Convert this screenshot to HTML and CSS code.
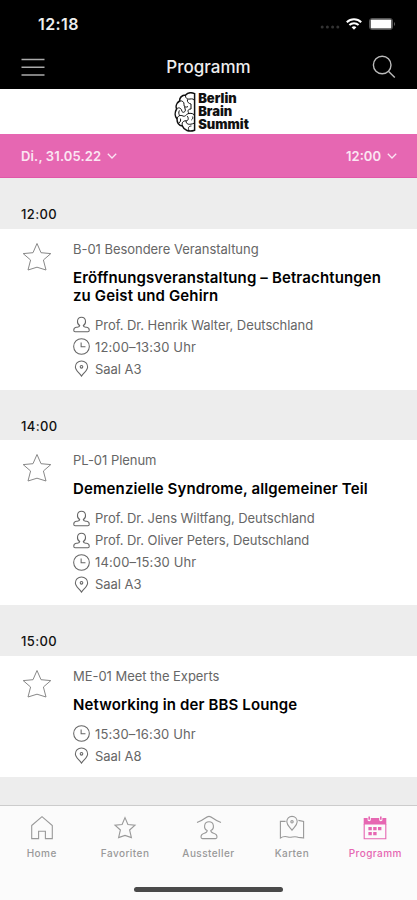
FILE: index.html
```html
<!DOCTYPE html>
<html lang="de">
<head>
    <meta charset="UTF-8"/>
    <meta name="viewport" content="width=device-width, initial-scale=1.0"/>
    <title>Programm</title>
    <link rel="stylesheet" href="styles.css">
</head>
<body>
    <svg class="sprite" aria-hidden="true">
        <symbol id="star" viewBox="0 0 30 30">
            <path d="M15 1.5 L19 10.7 L28.8 11.6 L21.4 18 L24 28 L15 25.2 L6 28 L8.6 18 L1.2 11.6 L11 10.7 Z"/>
        </symbol>
        <symbol id="person" viewBox="0 0 18 18">
            <path d="M7.1 10 C3.6 8.4 3.8 1.3 9 1.3 C14.2 1.3 14.4 8.4 10.9 10 C10.9 11.8 12.4 11.6 14.6 12 C16.6 12.4 17.2 13.4 17.2 15 C17.2 16.2 16.8 16.6 15.8 16.6 H2.2 C1.2 16.6 0.8 16.2 0.8 15 C0.8 13.4 1.4 12.4 3.4 12 C5.6 11.6 7.1 11.8 7.1 10 Z"/>
        </symbol>
        <symbol id="clock" viewBox="0 0 18 18">
            <circle cx="9" cy="9" r="8.3"/>
            <path d="M8.6 4.7 V9.2 H13.2"/>
        </symbol>
        <symbol id="pin" viewBox="0 0 18 18">
            <path d="M9 17.1 C6.4 13.4 2.5 10.8 2.5 7.4 C2.5 3.6 5.4 1 9 1 C12.6 1 15.5 3.6 15.5 7.4 C15.5 10.8 11.6 13.4 9 17.1 Z"/>
            <circle cx="9" cy="7.2" r="1.4"/>
        </symbol>
        <symbol id="chevron" viewBox="0 0 10 6">
            <path d="M0.8 0.8 L5 5 L9.2 0.8"/>
        </symbol>
    </svg>

    <header>
        <div class="status">
            <span class="time">12:18</span>
            <div class="status-icons">
                <svg class="signal" viewBox="0 0 20 4">
                    <circle cx="2.2" cy="2" r="1.5"/>
                    <circle cx="7.4" cy="2" r="1.5"/>
                    <circle cx="12.6" cy="2" r="1.5"/>
                    <circle cx="17.8" cy="2" r="1.5"/>
                </svg>
                <svg class="wifi" viewBox="0 0 16 12">
                    <path d="M0.8 4.2 C4.8 0.2 11.2 0.2 15.2 4.2"/>
                    <path d="M3.4 7 C6 4.5 10 4.5 12.6 7"/>
                    <path class="dot" d="M5.6 9.2 C7 8 9 8 10.4 9.2 L8 11.7 Z"/>
                </svg>
                <svg class="battery" viewBox="0 0 27 12">
                    <rect class="shell" x="0.5" y="0.5" width="23" height="11" rx="2.5"/>
                    <rect class="charge" x="1.6" y="1.6" width="20.8" height="8.8" rx="1"/>
                    <path class="shell" d="M25.5 4.5 V7.5"/>
                </svg>
            </div>
        </div>
        <div class="nav">
            <svg class="menu" viewBox="0 0 23 19">
                <path d="M0 1.5 H23 M0 9.3 H23 M0 17 H23"/>
            </svg>
            <h1>Programm</h1>
            <svg class="search" viewBox="0 0 24 24">
                <circle cx="10.2" cy="10" r="8.8"/>
                <path d="M16.4 16.2 L22.8 22.6"/>
            </svg>
        </div>
    </header>

    <div class="brand">
        <svg viewBox="0 0 22 40">
            <path class="outline" d="M20.6 1.6 C16 -0.2 13 1.4 11.6 3 C7.6 3 5.4 6 5.6 9 C2.2 11 1.6 14.6 2.6 17 C0.6 20.4 0.8 24.6 3 27 C3 31 5.4 33.6 8.4 34 C10 38.4 15 40.2 20.6 38.2 Z"/>
            <path d="M11.6 3 C11 6 13.4 7.6 16 7 C18 6.6 20.6 7 20.6 9 M5.6 9 C8 8.4 10.4 9.8 10 12.6 C9.6 15 12 15.6 14 14.6 M13.4 7.4 C13 10.6 15 11.4 17 12 V17 C14 17 13.2 19 15 21.4 M2.6 17 C5 14.6 7.4 16.4 7.8 19 C8.4 21 11 20.6 11.4 18.2 L10.6 14.8 M3 27 C3.6 24 6 22.6 9 24 C11.4 25.2 12 22 15 21.4 C17.6 21 20.6 22 20.6 24 M8.4 34 C7.4 31 9 28.6 12 28.8 C14.6 29 14.8 26 13.2 24 M12 28.8 C12 32.4 15 33.4 20.6 31 M15 38.4 C13.6 35.6 15 34 17.4 34 M6 24 C4.6 22 4.4 20.6 5.4 18.4 M5 31 C6.4 30 7 28.4 6.4 26.6 M17.4 28 C18.6 27 19.2 26 18.4 24.6"/>
        </svg>
        <div class="brand-name">Berlin<br>Brain<br>Summit</div>
    </div>

    <div class="filter">
        <div class="filter-item date">Di., 31.05.22 <svg><use href="#chevron"/></svg></div>
        <div class="filter-item">12:00 <svg><use href="#chevron"/></svg></div>
    </div>

    <main>
        <h2>12:00</h2>
        <div class="session">
            <svg class="fav"><use href="#star"/></svg>
            <div class="info">
                <p class="category">B-01 Besondere Veranstaltung</p>
                <h3>Eröffnungsveranstaltung – Betrachtungen<br>zu Geist und Gehirn</h3>
                <ul>
                    <li><svg><use href="#person"/></svg><span>Prof. Dr. Henrik Walter, Deutschland</span></li>
                    <li class="hours"><svg><use href="#clock"/></svg><span>12:00–13:30 Uhr</span></li>
                    <li><svg><use href="#pin"/></svg><span>Saal A3</span></li>
                </ul>
            </div>
        </div>

        <h2>14:00</h2>
        <div class="session">
            <svg class="fav"><use href="#star"/></svg>
            <div class="info">
                <p class="category">PL-01 Plenum</p>
                <h3>Demenzielle Syndrome, allgemeiner Teil</h3>
                <ul>
                    <li><svg><use href="#person"/></svg><span>Prof. Dr. Jens Wiltfang, Deutschland</span></li>
                    <li><svg><use href="#person"/></svg><span>Prof. Dr. Oliver Peters, Deutschland</span></li>
                    <li class="hours"><svg><use href="#clock"/></svg><span>14:00–15:30 Uhr</span></li>
                    <li><svg><use href="#pin"/></svg><span>Saal A3</span></li>
                </ul>
            </div>
        </div>

        <h2>15:00</h2>
        <div class="session">
            <svg class="fav"><use href="#star"/></svg>
            <div class="info">
                <p class="category">ME-01 Meet the Experts</p>
                <h3>Networking in der BBS Lounge</h3>
                <ul>
                    <li class="hours"><svg><use href="#clock"/></svg><span>15:30–16:30 Uhr</span></li>
                    <li><svg><use href="#pin"/></svg><span>Saal A8</span></li>
                </ul>
            </div>
        </div>
    </main>

    <footer>
        <nav class="tabs">
            <a class="tab">
                <svg viewBox="0 0 26 26"><path d="M2.7 10.5 L13 1.7 L23.3 10.5 V23.6 H16.4 V16.2 H9.6 V23.6 H2.7 Z"/></svg>
                <span>Home</span>
            </a>
            <a class="tab">
                <svg viewBox="0 0 26 26"><path d="M13 2.6 L15.9 9.5 L23 10.1 L17.6 15 L19.4 22.6 L13 20.4 L6.6 22.6 L8.4 15 L3 10.1 L10.1 9.5 Z"/></svg>
                <span>Favoriten</span>
            </a>
            <a class="tab">
                <svg viewBox="0 0 26 26"><path d="M1 7.6 C8.6 4.8 10 1.4 13 1.4 C16 1.4 17.4 4.8 25 7.6 M11.2 15.6 C7.2 13.8 7.8 6.8 13 6.8 C18.2 6.8 18.8 13.8 14.8 15.6 C14.8 19.6 21 16.8 21 22 C21 23.2 20.6 23.6 19.6 23.6 H6.4 C5.4 23.6 5 23.2 5 22 C5 16.8 11.2 19.6 11.2 15.6 Z"/></svg>
                <span>Aussteller</span>
            </a>
            <a class="tab">
                <svg viewBox="0 0 26 26"><path d="M6.6 6.4 H1.4 V23 C4.2 21.2 6.6 21.2 9 22 C12 23.2 14.6 20.8 18 22 C20.6 23 22.4 22.4 24.6 23 V6.4 L19.4 5.4 M13 15.2 C11 12.2 7.8 10.2 7.8 6.8 C7.8 3.6 10 1.4 13 1.4 C16 1.4 18.2 3.6 18.2 6.8 C18.2 10.2 15 12.2 13 15.2 Z"/><circle cx="13" cy="6.8" r="1.2"/></svg>
                <span>Karten</span>
            </a>
            <a class="tab active">
                <svg viewBox="0 0 26 26">
                    <path d="M2.2 9 V23.8 H23.8 V9"/>
                    <path class="solid" d="M1.7 3 H5.6 V5.2 Q7.2 7.4 8.8 5.2 V3 H17.2 V5.2 Q18.8 7.4 20.4 5.2 V3 H24.3 V9.6 H1.7 Z"/>
                    <path class="solid" d="M6.4 1.4 H8 V4.8 H6.4 Z M18 1.4 H19.6 V4.8 H18 Z"/>
                    <path class="solid" d="M6.4 12 H9.8 V15.2 H6.4 Z M11.2 12 H14.6 V15.2 H11.2 Z M16 12 H19.4 V15.2 H16 Z M6.4 17 H9.8 V20.2 H6.4 Z M11.2 17 H14.6 V20.2 H11.2 Z"/>
                </svg>
                <span>Programm</span>
            </a>
        </nav>
        <div class="home-bar"></div>
    </footer>
</body>
</html>
```

FILE: styles.css
```css
* {
    box-sizing: border-box;
}

body {
    margin: 0;
    height: 900px;
    display: flex;
    flex-direction: column;
    overflow: hidden;
    font-family: Inter, "Liberation Sans", sans-serif;
    background: #ededed;
}

h1, h2, h3, p, ul {
    margin: 0;
    padding: 0;
}

svg {
    display: block;
    flex: none;
    fill: none;
    stroke: currentColor;
}

.sprite {
    display: none;
}

header {
    height: 89px;
    background: #000;
    color: #eee;
}

.status {
    display: flex;
    justify-content: space-between;
    align-items: center;
    height: 46px;
    padding: 1px 21px 0 38px;
}

.time {
    font-size: 16px;
    font-weight: 600;
    letter-spacing: 0.4px;
}

.status-icons {
    display: flex;
    align-items: center;
}

.signal {
    width: 20px;
    height: 4px;
    margin: 7px 6px 0 0;
    fill: #333;
    stroke: none;
}

.wifi {
    width: 16px;
    height: 12px;
    margin-right: 7px;
    stroke: #fff;
    stroke-width: 2;
}

.wifi .dot {
    fill: #fff;
    stroke: none;
}

.battery {
    width: 27px;
    height: 12px;
}

.shell {
    stroke: #555;
}

.charge {
    fill: #fff;
    stroke: none;
}

.nav {
    display: flex;
    justify-content: space-between;
    align-items: center;
    height: 42px;
    padding: 0 21px;
}

.nav h1 {
    font-size: 17px;
    font-weight: 500;
}

.menu {
    width: 24px;
    height: 19px;
    stroke: #aaa;
    stroke-width: 1.5;
}

.search {
    width: 24px;
    height: 24px;
    stroke: #bbb;
    stroke-width: 1.4;
}

.brand {
    display: flex;
    justify-content: center;
    align-items: center;
    gap: 2px;
    height: 45px;
    padding-left: 6px;
    background: #fff;
    color: #111;
}

.brand svg {
    width: 22px;
    height: 40px;
    stroke-width: 1;
}

.brand .outline {
    stroke-width: 1.5;
}

.brand-name {
    font-size: 13px;
    font-weight: 900;
    line-height: 13px;
}

.filter {
    display: flex;
    justify-content: space-between;
    align-items: center;
    height: 44px;
    padding: 0 20px 0 21px;
    background: #e667b2;
    border-bottom: 1px solid #e058a8;
    color: #fbe6f3;
    font-size: 13px;
    font-weight: 600;
}

.filter-item {
    display: flex;
    align-items: center;
    gap: 6px;
}

.date {
    letter-spacing: 0.15px;
}

.filter svg {
    width: 10px;
    height: 6px;
    stroke-width: 1.3;
}

main {
    flex: 1;
    overflow: hidden;
}

h2 {
    height: 50.5px;
    padding: 26px 21px 0;
    font-size: 13px;
    font-weight: 500;
    line-height: 20px;
    letter-spacing: 0.4px;
    color: #111;
}

.session {
    display: flex;
    padding: 10px 21px;
    background: #fff;
}

.fav {
    width: 30px;
    height: 30px;
    margin: 3px 21px 0 1px;
    color: #888;
    stroke-width: 1;
}

.category {
    font-size: 13px;
    line-height: 20px;
    letter-spacing: -0.04px;
    color: #666;
}

h3 {
    margin: 10px 0 9px;
    font-size: 15px;
    font-weight: 600;
    line-height: 18px;
    letter-spacing: 0.13px;
    white-space: nowrap;
    color: #000;
}

ul {
    list-style: none;
}

li {
    display: flex;
    align-items: center;
    gap: 5px;
    height: 22px;
    font-size: 13px;
    letter-spacing: -0.05px;
    color: #666;
}

.hours {
    letter-spacing: 0.13px;
}

li svg {
    width: 17px;
    height: 17px;
    stroke-width: 1.1;
}

footer {
    height: 95px;
    background: #fbfbfb;
    border-top: 1px solid #ccc;
}

.tabs {
    display: flex;
    height: 78px;
    padding-top: 9px;
}

.tab {
    flex: 1;
    display: flex;
    flex-direction: column;
    align-items: center;
    gap: 5px;
    font-size: 10px;
    font-weight: 500;
    line-height: 14px;
    letter-spacing: 0.45px;
    color: #999;
}

.tab svg {
    width: 26px;
    height: 26px;
    stroke-width: 1.1;
}

.tab.active {
    color: #e667b2;
}

.solid {
    fill: currentColor;
    stroke: none;
}

.home-bar {
    width: 149px;
    height: 5px;
    margin: 3px auto 0;
    border-radius: 3px;
    background: #4a4a4a;
}
```
